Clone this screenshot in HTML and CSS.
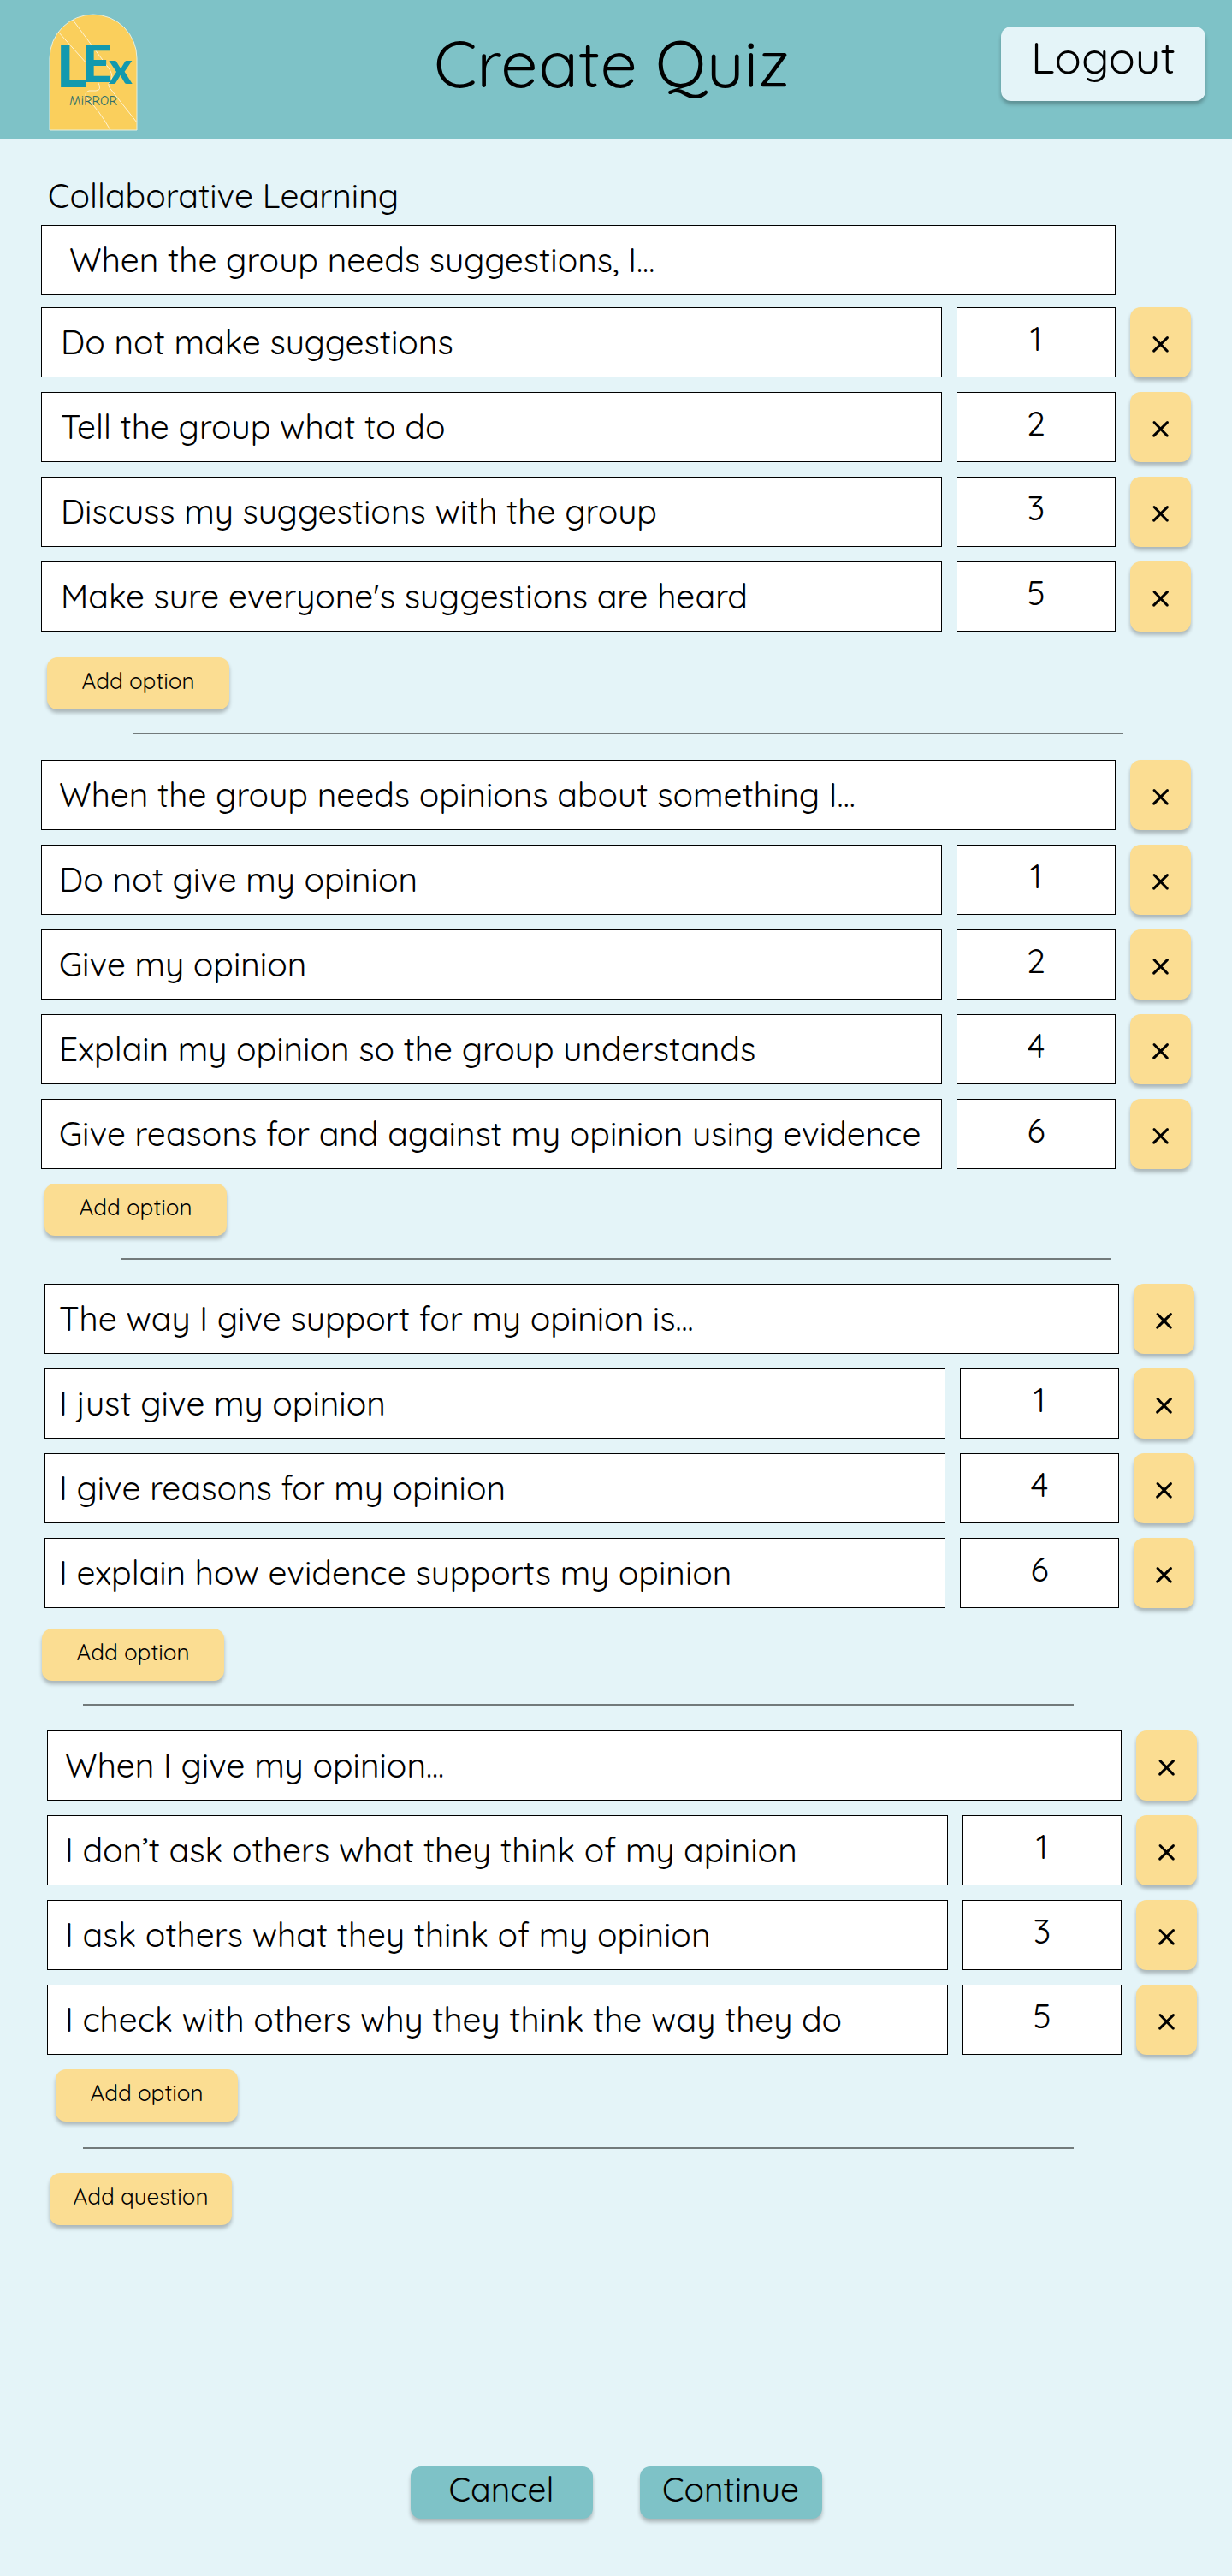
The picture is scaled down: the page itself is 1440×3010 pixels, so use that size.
FILE: index.html
```html
<!DOCTYPE html>
<html lang="en">
<head>
<meta charset="utf-8">
<meta name="viewport" content="width=device-width, initial-scale=1">
<title>Create Quiz</title>
<link rel="stylesheet" href="styles.css">
</head>
<body>
<header class="topbar">
  <svg class="logo" viewBox="0 0 104 138" role="img" aria-label="LEx Mirror">
    <path class="logo-shape" d="M1 136V52a51 51 0 0 1 102 0v84z"/>
    <path class="logo-line" d="M11 21 45 59M28 7 71 65Q77 75 71 80Q68 84 73 89L103 127M57 79Q63 90 55 90H47Q41 92 44 98Q59 113 72 136"/>
    <text class="logo-big" x="9" y="86">L</text>
    <text class="logo-big logo-e" x="39" y="80">E</text>
    <text class="logo-big logo-x" x="70" y="82">x</text>
    <text class="logo-small" x="24" y="107">MiRROR</text>
  </svg>
  <h1 class="title">Create Quiz</h1>
  <button class="btn logout" type="button">Logout</button>
</header>

<main>
  <form class="quiz">
    <label class="topic" for="q1">Collaborative Learning</label>

    <section class="question question-first" aria-label="Question 1">
      <div class="row"><input class="field" id="q1" type="text" value="When the group needs suggestions, I..."></div>
      <div class="row"><input class="field" type="text" aria-label="Option" value="Do not make suggestions"><input class="score" type="text" aria-label="Score" value="1"><button class="btn remove" type="button" aria-label="Remove option">×</button></div>
      <div class="row"><input class="field" type="text" aria-label="Option" value="Tell the group what to do"><input class="score" type="text" aria-label="Score" value="2"><button class="btn remove" type="button" aria-label="Remove option">×</button></div>
      <div class="row"><input class="field" type="text" aria-label="Option" value="Discuss my suggestions with the group"><input class="score" type="text" aria-label="Score" value="3"><button class="btn remove" type="button" aria-label="Remove option">×</button></div>
      <div class="row"><input class="field" type="text" aria-label="Option" value="Make sure everyone's suggestions are heard"><input class="score" type="text" aria-label="Score" value="5"><button class="btn remove" type="button" aria-label="Remove option">×</button></div>
      <button class="btn add" type="button">Add option</button>
    </section>
    <hr class="divider divider-first">

    <section class="question question-second" aria-label="Question 2">
      <div class="row"><input class="field" type="text" aria-label="Question" value="When the group needs opinions about something I..."><button class="btn remove" type="button" aria-label="Remove question">×</button></div>
      <div class="row"><input class="field" type="text" aria-label="Option" value="Do not give my opinion"><input class="score" type="text" aria-label="Score" value="1"><button class="btn remove" type="button" aria-label="Remove option">×</button></div>
      <div class="row"><input class="field" type="text" aria-label="Option" value="Give my opinion"><input class="score" type="text" aria-label="Score" value="2"><button class="btn remove" type="button" aria-label="Remove option">×</button></div>
      <div class="row"><input class="field" type="text" aria-label="Option" value="Explain my opinion so the group understands"><input class="score" type="text" aria-label="Score" value="4"><button class="btn remove" type="button" aria-label="Remove option">×</button></div>
      <div class="row"><input class="field" type="text" aria-label="Option" value="Give reasons for and against my opinion using evidence"><input class="score" type="text" aria-label="Score" value="6"><button class="btn remove" type="button" aria-label="Remove option">×</button></div>
      <button class="btn add" type="button">Add option</button>
    </section>
    <hr class="divider divider-second">

    <section class="question question-third" aria-label="Question 3">
      <div class="row"><input class="field" type="text" aria-label="Question" value="The way I give support for my opinion is..."><button class="btn remove" type="button" aria-label="Remove question">×</button></div>
      <div class="row"><input class="field" type="text" aria-label="Option" value="I just give my opinion"><input class="score" type="text" aria-label="Score" value="1"><button class="btn remove" type="button" aria-label="Remove option">×</button></div>
      <div class="row"><input class="field" type="text" aria-label="Option" value="I give reasons for my opinion"><input class="score" type="text" aria-label="Score" value="4"><button class="btn remove" type="button" aria-label="Remove option">×</button></div>
      <div class="row"><input class="field" type="text" aria-label="Option" value="I explain how evidence supports my opinion"><input class="score" type="text" aria-label="Score" value="6"><button class="btn remove" type="button" aria-label="Remove option">×</button></div>
      <button class="btn add" type="button">Add option</button>
    </section>
    <hr class="divider">

    <section class="question question-fourth" aria-label="Question 4">
      <div class="row"><input class="field" type="text" aria-label="Question" value="When I give my opinion..."><button class="btn remove" type="button" aria-label="Remove question">×</button></div>
      <div class="row"><input class="field" type="text" aria-label="Option" value="I don’t ask others what they think of my apinion"><input class="score" type="text" aria-label="Score" value="1"><button class="btn remove" type="button" aria-label="Remove option">×</button></div>
      <div class="row"><input class="field" type="text" aria-label="Option" value="I ask others what they think of my opinion"><input class="score" type="text" aria-label="Score" value="3"><button class="btn remove" type="button" aria-label="Remove option">×</button></div>
      <div class="row"><input class="field" type="text" aria-label="Option" value="I check with others why they think the way they do"><input class="score" type="text" aria-label="Score" value="5"><button class="btn remove" type="button" aria-label="Remove option">×</button></div>
      <button class="btn add" type="button">Add option</button>
    </section>
    <hr class="divider divider-last">

    <button class="btn add add-question" type="button">Add question</button>

    <div class="actions">
      <button class="btn action" type="button">Cancel</button>
      <button class="btn action" type="submit">Continue</button>
    </div>
  </form>
</main>
</body>
</html>
```
FILE: styles.css
```css
:root {
  --teal: #7ec2c7;
  --ice: #e4f4f8;
  --sand: #fbdd92;
  --gap: 17px;
}

* { box-sizing: border-box; }

body {
  margin: 0;
  background: var(--ice);
  color: #000;
  font-family: Quicksand, "DejaVu Sans", sans-serif;
  font-size: 39px;
  font-weight: 400;
}

input, button {
  margin: 0;
  font: inherit;
  color: inherit;
}

/* Header */
.topbar {
  display: grid;
  grid-template-columns: 203px 1fr 239px;
  align-items: start;
  height: 163px;
  padding: 0 31px 0 57px;
  background: var(--teal);
}
.logo { width: 104px; height: 138px; margin-top: 16px; }
.logo-shape { fill: #facf5c; stroke: #e4eedf; stroke-width: 1; }
.logo-line { fill: none; stroke: #fdf3d5; stroke-width: 1; }
.logo-big {
  fill: #1299ae;
  font-family: Lato, sans-serif;
  font-size: 68px;
  font-weight: 900;
}
.logo-e { font-size: 60px; }
.logo-x { font-size: 52px; }
.logo-small { fill: #2f6f6a; font-family: "Comic Neue", Lato, sans-serif; font-size: 16px; }
.title {
  margin: 0;
  padding-top: 28px;
  font-size: 77px;
  font-weight: 400;
  line-height: 90px;
  text-align: center;
}

/* Buttons */
.btn {
  display: block;
  border: 0;
  border-radius: 12px;
  box-shadow: 0 4px 4px rgba(0, 0, 0, .25);
  text-align: center;
  cursor: pointer;
}
.logout {
  height: 87px;
  margin-top: 31px;
  padding: 0 0 16px;
  background: var(--ice);
  font-size: 52px;
}
.add {
  width: 213px;
  height: 61px;
  padding: 0 0 6px;
  background: var(--sand);
  font-size: 26px;
}
.remove {
  flex: none;
  width: 71px;
  height: 82px;
  padding: 0;
  background: var(--sand);
  font-size: 52px;
}
.action {
  width: 213px;
  height: 61px;
  padding: 0 0 8px;
  background: var(--teal);
}

/* Quiz form */
.topic {
  display: block;
  padding: 41px 56px 10px;
  line-height: 49px;
}
.question {
  display: flex;
  flex-direction: column;
  gap: var(--gap);
}
.row { display: flex; gap: var(--gap); }
.field, .score {
  height: 82px;
  border: 1px solid #000;
  border-radius: 0;
  background: #fff;
}
.field { flex: 1; min-width: 0; padding: 0 20px 2px; }
.score { flex: none; width: 186px; padding: 0 0 10px; text-align: center; }

.question-first { padding: 0 48px; }
.question-first .row:first-child { margin-right: 88px; margin-bottom: -3px; }
.question-first .field { padding-left: 22px; }
.question-first .row:first-child .field { padding-left: 32px; }
.question-first .add { margin: 13px 0 0 7px; }
.question-second { padding: 0 48px; }
.question-second .add { margin-left: 4px; }
.question-third { padding: 0 44px 0 52px; }
.question-third .field { padding-left: 16px; }
.question-third .add { margin: 7px 0 0 -3px; }
.question-fourth { padding: 0 41px 0 55px; }
.question-fourth .add { margin-left: 10px; }

.divider {
  height: 2px;
  margin: 27px 185px 29px 97px;
  border: 0;
  background: #727a7b;
}
.divider-first { margin: 27px 127px 30px 155px; }
.divider-second { margin: 26px 141px 28px; }
.divider-last { margin-top: 30px; margin-bottom: 28px; }

.add-question { margin-left: 58px; }
.actions {
  display: flex;
  justify-content: center;
  gap: 55px;
  padding: 282px 0 67px;
}
```
